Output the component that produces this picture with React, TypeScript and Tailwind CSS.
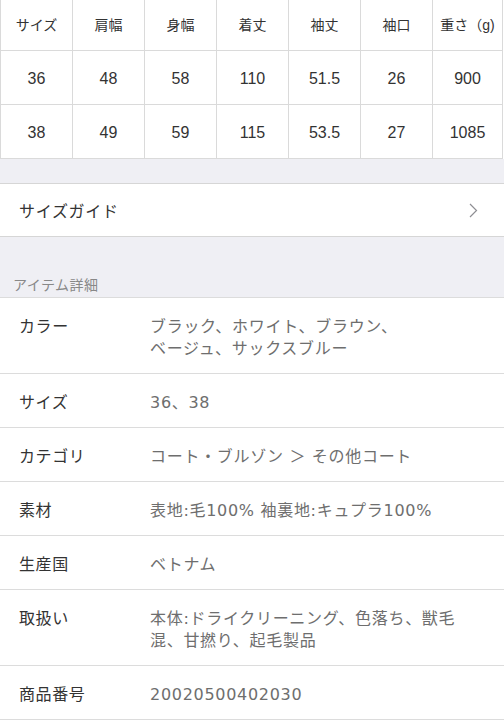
import React from "react";

const headers = ["サイズ", "肩幅", "身幅", "着丈", "袖丈", "袖口", "重さ（g)"];
const rows = [
  ["36", "48", "58", "110", "51.5", "26", "900"],
  ["38", "49", "59", "115", "53.5", "27", "1085"],
];

const widths = ["w-[73px] border-l", "w-[72px]", "w-[72px]", "w-[72px]", "w-[72px]", "w-[72px]", "w-[70px]"];

const details: [string, string[]][] = [
  ["カラー", ["ブラック、ホワイト、ブラウン、", "ベージュ、サックスブルー"]],
  ["サイズ", ["36、38"]],
  ["カテゴリ", ["コート・ブルゾン ＞ その他コート"]],
  ["素材", ["表地:毛100% 袖裏地:キュプラ100%"]],
  ["生産国", ["ベトナム"]],
  ["取扱い", ["本体:ドライクリーニング、色落ち、獣毛", "混、甘撚り、起毛製品"]],
  ["商品番号", ["20020500402030"]],
];

const jp = '"Liberation Sans", "Noto Sans CJK JP", sans-serif';
const val = '"DejaVu Sans", "Noto Sans CJK JP", sans-serif';

export default function App() {
  return (
    <div className="w-[504px] h-[720px] overflow-hidden bg-white" style={{ fontFamily: jp }}>
      {/* size table */}
      <div className="flex flex-col bg-white">
        <div className="flex h-[51px]">
          {headers.map((h, i) => (
            <div
              key={i}
              className={`${widths[i]} flex items-center justify-center border-r border-b border-[#dadada] text-[14px] text-[#333] whitespace-nowrap`}
            >
              {h}
            </div>
          ))}
        </div>
        {rows.map((r, ri) => (
          <div key={ri} className="flex h-[54px]">
            {r.map((c, i) => (
              <div
                key={i}
                className={`${widths[i]} flex items-center justify-center border-r border-b border-[#dadada] pt-[2px] text-[16px] text-[#333]`}
              >
                {c}
              </div>
            ))}
          </div>
        ))}
      </div>

      {/* gray gap */}
      <div className="h-[24px] bg-[#efeff4]" />

      {/* size guide */}
      <div className="flex h-[54px] items-center justify-between border-y border-[#d6d6d6] bg-white pl-[19px] pr-[26px]">
        <span className="pt-[3px] text-[16px] tracking-[0.7px] text-[#333]">サイズガイド</span>
        <svg width="9" height="15" viewBox="0 0 9 15" fill="none">
          <path d="M1 1l6.5 6.5L1 14" stroke="#8e8e93" strokeWidth="1.2" />
        </svg>
      </div>

      {/* item detail header */}
      <div className="flex h-[61px] items-end border-b border-[#dcdcdc] bg-[#efeff4] pl-[13px] pb-[2px]">
        <span className="text-[14px] leading-[20px] tracking-[0.5px] text-[#888]">アイテム詳細</span>
      </div>

      {/* detail rows */}
      <div className="flex flex-col bg-white">
        {details.map(([label, lines], i) => (
          <div key={i} className="flex border-b border-[#dcdcdc] pt-[18px] pb-[13px]">
            <div className="w-[150px] shrink-0 pl-[19px] text-[16px] leading-[22px] tracking-[0.6px] text-[#333]">
              {label}
            </div>
            <div
              className="flex flex-col text-[16px] leading-[22px] tracking-[0.7px] text-[#6e6e6e]"
              style={{ fontFamily: val }}
            >
              {lines.map((l, j) => (
                <span key={j} className="whitespace-nowrap">{l}</span>
              ))}
            </div>
          </div>
        ))}
      </div>
    </div>
  );
}
